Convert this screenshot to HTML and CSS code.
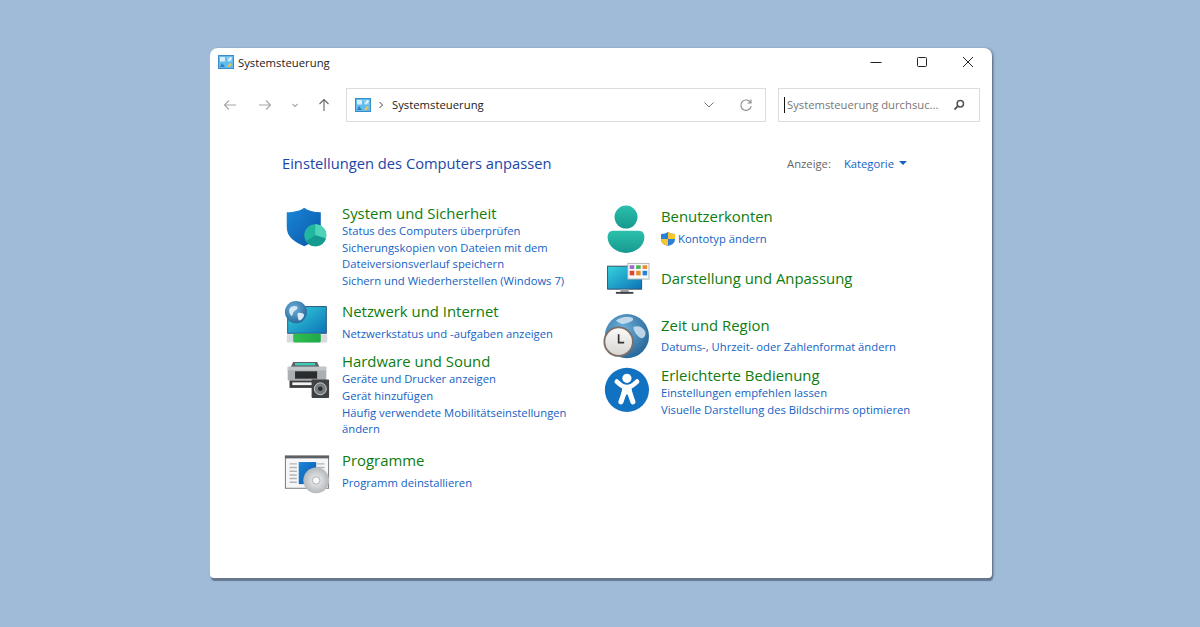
FILE: index.html
```html
<!DOCTYPE html>
<html lang="de">
<head>
<meta charset="utf-8">
<title>Systemsteuerung</title>
<link rel="stylesheet" href="styles.css">
</head>
<body>
<svg class="defs" width="0" height="0" aria-hidden="true">
  <defs>
    <linearGradient id="gBlue" x1="0" y1="0" x2="1" y2="1"><stop offset="0" stop-color="#1a86d8"/><stop offset="1" stop-color="#0a56a8"/></linearGradient>
    <linearGradient id="gTeal" x1="0" y1="0" x2="0" y2="1"><stop offset="0" stop-color="#2cc0ac"/><stop offset="1" stop-color="#16998f"/></linearGradient>
    <linearGradient id="gScreen" x1="0" y1="0" x2="1" y2="1"><stop offset="0" stop-color="#35d3dc"/><stop offset="1" stop-color="#0d72b8"/></linearGradient>
    <linearGradient id="gGreen" x1="0" y1="0" x2="1" y2="0"><stop offset="0" stop-color="#2fbf4e"/><stop offset="1" stop-color="#20a84a"/></linearGradient>
    <radialGradient id="gGlobe" cx=".4" cy=".35" r=".75"><stop offset="0" stop-color="#6fb2dc"/><stop offset="1" stop-color="#1f5f92"/></radialGradient>
    <radialGradient id="gDisc" cx=".5" cy=".5" r=".5"><stop offset="0" stop-color="#f2f2f2"/><stop offset="1" stop-color="#b4b8bc"/></radialGradient>
    <linearGradient id="gFace" x1="0" y1="0" x2="0" y2="1"><stop offset="0" stop-color="#fafafa"/><stop offset="1" stop-color="#d9d6d2"/></linearGradient>
    <symbol id="cp" viewBox="0 0 16 14">
      <rect x=".5" y=".5" width="15" height="13" fill="#63bdec" stroke="#3a8cc6"/>
      <rect x="2" y="2" width="5" height="4.500" fill="#d7eefa"/>
      <path d="M4 8l3 4H2z" fill="#2f7fc0"/>
      <path d="M9 2h5v4.500H9z" fill="#8fd2f2"/>
      <path d="M12.500 2L10 5.500l1 1L14 3z" fill="#f1f6fa"/>
      <path d="M9 12l3-4 2 1.500L11 12z" fill="#f0c648"/>
    </symbol>
  </defs>
</svg>
<main class="window">
  <header class="titlebar">
    <svg class="title-icon"><use href="#cp"/></svg>
    <span class="title-text">Systemsteuerung</span>
    <div class="controls">
      <svg class="ctl" viewBox="0 0 46 20"><path d="M17.500 10.500h11" stroke="#222" fill="none"/></svg>
      <svg class="ctl" viewBox="0 0 46 20"><rect x="18.500" y="5.500" width="9" height="9" rx="1" stroke="#222" fill="none"/></svg>
      <svg class="ctl" viewBox="0 0 46 20"><path d="M18 5l10 10M28 5L18 15" stroke="#222" fill="none"/></svg>
    </div>
  </header>
  <div class="toolbar">
    <nav class="nav">
      <svg class="nav-btn" viewBox="0 0 20 20"><path d="M16 10H4.500M9 5.500L4.500 10 9 14.500" fill="none" stroke="#a6a6a6" stroke-width="1.100"/></svg>
      <svg class="nav-btn" viewBox="0 0 20 20"><path d="M4 10h11.500M11 5.500l4.500 4.500-4.500 4.500" fill="none" stroke="#a6a6a6" stroke-width="1.100"/></svg>
      <svg class="nav-mini" viewBox="0 0 12 20"><path d="M3.500 9l2.500 2.500L8.500 9" fill="none" stroke="#a6a6a6" stroke-width="1.100"/></svg>
      <svg class="nav-btn" viewBox="0 0 20 20"><path d="M10 16V4.500M5.500 9L10 4.500 14.500 9" fill="none" stroke="#666" stroke-width="1.100"/></svg>
    </nav>
    <div class="address">
      <svg class="addr-icon"><use href="#cp"/></svg>
      <svg class="addr-sep" viewBox="0 0 6 10"><path d="M1.500 2l3 3-3 3" fill="none" stroke="#444"/></svg>
      <span class="addr-text">Systemsteuerung</span>
      <svg class="addr-chev" viewBox="0 0 12 8"><path d="M1.500 1.500L6 6l4.500-4.500" fill="none" stroke="#777"/></svg>
      <svg class="addr-refresh" viewBox="0 0 14 14"><path d="M11.800 5A5.200 5.200 0 1 0 12.200 8" fill="none" stroke="#8a8a8a" stroke-width="1.100"/><path d="M12 1.500V5H8.500" fill="none" stroke="#8a8a8a" stroke-width="1.100"/></svg>
    </div>
    <div class="search">
      <span class="caret"></span>
      <span class="search-text">Systemsteuerung durchsuc...</span>
      <svg class="search-icon" viewBox="0 0 12 12"><circle cx="7.300" cy="4.700" r="3.200" fill="none" stroke="#555" stroke-width="1.500"/><path d="M4.800 7.200L1.500 10.500" stroke="#555" stroke-width="1.800"/></svg>
    </div>
  </div>
  <section class="content">
    <div class="content-head">
      <h1 class="heading">Einstellungen des Computers anpassen</h1>
      <div class="view">
        <span class="view-label">Anzeige:</span>
        <a class="view-value">Kategorie</a>
        <span class="view-caret"></span>
      </div>
    </div>
    <div class="columns">
      <div class="col col-left">
        <article class="cat cat-system">
          <svg class="cat-icon" viewBox="0 0 50 50">
            <path d="M22 4c4 3 10 5 18 5v16c0 11-7 16-18 21C11 41 3 36 3 25V9c8 0 15-2 19-5z" fill="url(#gBlue)"/>
            <circle cx="34" cy="34" r="12" fill="#20b6a0"/>
            <path d="M34 34V22a12 12 0 0 1 11.500 15.500z" fill="#4fd3b8"/>
            <path d="M34 34l11.500 3.500A12 12 0 0 1 24 40.500z" fill="#149a90"/>
          </svg>
          <div class="cat-body">
            <h2 class="cat-title">System und Sicherheit</h2>
            <a class="link">Status des Computers überprüfen</a>
            <a class="link">Sicherungskopien von Dateien mit dem Dateiversionsverlauf speichern</a>
            <a class="link">Sichern und Wiederherstellen (Windows 7)</a>
          </div>
        </article>
        <article class="cat cat-net">
          <svg class="cat-icon" viewBox="0 0 50 50">
            <rect x="4" y="5" width="42" height="29" fill="url(#gScreen)" stroke="#1f4f78"/>
            <rect x="3" y="35" width="44" height="9" rx="1" fill="#d6dadd"/>
            <rect x="10" y="34.500" width="30" height="9.500" rx="1.500" fill="url(#gGreen)"/>
            <circle cx="13" cy="11" r="12" fill="url(#gGlobe)"/>
            <path d="M6 7c3-3 6-3 8-2 2 2-1 4-3 5-2 2-1 5-3 5-2-2-3-5-2-8zM15 12c3-1 6 0 7 2-1 4-4 6-6 6-1-3-2-6-1-8z" fill="#d7e9f4"/>
          </svg>
          <div class="cat-body">
            <h2 class="cat-title">Netzwerk und Internet</h2>
            <a class="link link-gap">Netzwerkstatus und -aufgaben anzeigen</a>
          </div>
        </article>
        <article class="cat cat-hw">
          <svg class="cat-icon" viewBox="0 0 50 50">
            <path d="M7 17l3-6h26l3 6z" fill="#5d6367"/>
            <rect x="12" y="12" width="22" height="2.500" fill="#3fd0b8"/>
            <rect x="4" y="16" width="42" height="15" rx="1" fill="#a9afb2"/>
            <rect x="4" y="16" width="42" height="4" fill="#c2c6c8"/>
            <rect x="12" y="21" width="24" height="8" fill="#2a2c2e"/>
            <rect x="6" y="31" width="30" height="8" fill="#3a3c3e"/>
            <rect x="9" y="33" width="26" height="3" fill="#f2f2f2"/>
            <rect x="30" y="30" width="19" height="20" rx="1" fill="#3f4245"/>
            <circle cx="39.500" cy="40" r="6.500" fill="#777b7f" stroke="#d0d2d4"/>
            <circle cx="39.500" cy="40" r="2.500" fill="#2b2d2f"/>
          </svg>
          <div class="cat-body">
            <h2 class="cat-title">Hardware und Sound</h2>
            <a class="link">Geräte und Drucker anzeigen</a>
            <a class="link">Gerät hinzufügen</a>
            <a class="link">Häufig verwendete Mobilitätseinstellungen ändern</a>
          </div>
        </article>
        <article class="cat cat-prog">
          <svg class="cat-icon" viewBox="0 0 50 50">
            <rect x="1.500" y="5.500" width="47" height="35" fill="#f6f6f6" stroke="#6f7276"/>
            <rect x="1" y="5" width="48" height="3" fill="#5d6064"/>
            <path d="M6 14h8M6 18h8M6 22h8M6 26h8M6 30h8M6 34h8M36 14h8M36 18h8M36 22h8" stroke="#b3b6b9" stroke-width="1.600"/>
            <rect x="16" y="12" width="19" height="24" fill="url(#gBlue)"/>
            <circle cx="35" cy="32" r="14" fill="url(#gDisc)"/>
            <circle cx="35" cy="32" r="4" fill="#fafafa" stroke="#a8acb0"/>
          </svg>
          <div class="cat-body">
            <h2 class="cat-title">Programme</h2>
            <a class="link link-gap">Programm deinstallieren</a>
          </div>
        </article>
      </div>
      <div class="col col-wide">
        <article class="cat cat-user">
          <svg class="cat-icon" viewBox="0 0 50 50">
            <circle cx="25" cy="12" r="12.500" fill="url(#gTeal)"/>
            <path d="M5 34c0-4 2-7 6-7h28c4 0 6 3 6 7 0 10-10 17-20 17S5 44 5 34z" fill="url(#gTeal)"/>
          </svg>
          <div class="cat-body">
            <h2 class="cat-title">Benutzerkonten</h2>
            <a class="link link-shield">
              <svg class="shield" viewBox="0 0 16 16">
                <path d="M8 1c2 1 4 2 7 2v5c0 4-3 6-7 7-4-1-7-3-7-7V3c3 0 5-1 7-2z" fill="#2b7fd4"/>
                <path d="M8 1c2 1 4 2 7 2v5H8zM8 8v7c-4-1-7-3-7-7z" fill="#f7c52d"/>
              </svg>
              Kontotyp ändern
            </a>
          </div>
        </article>
        <article class="cat cat-disp">
          <svg class="cat-icon" viewBox="0 0 50 50">
            <rect x="5" y="-2" width="37" height="25" fill="url(#gScreen)" stroke="#324a5e"/>
            <rect x="19" y="23" width="9" height="5" fill="#9aa0a5"/>
            <rect x="14" y="26" width="19" height="2" fill="#3c4146"/>
            <rect x="27" y="-5" width="23" height="17" fill="#fbfbfb" stroke="#aab0b4"/>
            <rect x="29" y="-3" width="5" height="4" fill="#9a6cc8"/>
            <rect x="36" y="-3" width="5" height="4" fill="#4fb35a"/>
            <rect x="43" y="-3" width="5" height="4" fill="#ef8a2c"/>
            <rect x="29" y="3" width="5" height="5" fill="#d9483b"/>
            <rect x="36" y="3" width="5" height="5" fill="#e88e2e"/>
            <rect x="43" y="3" width="5" height="5" fill="#2b7fd4"/>
          </svg>
          <div class="cat-body">
            <h2 class="cat-title">Darstellung und Anpassung</h2>
          </div>
        </article>
        <article class="cat cat-time">
          <svg class="cat-icon" viewBox="0 0 50 50">
            <circle cx="26" cy="23" r="24" fill="url(#gGlobe)"/>
            <path d="M14 6c6-4 13-5 18-3 3 3-3 5-7 6-4 2-7 0-11-3zM33 13c5-2 10 0 13 5 1 5-2 8-5 7-4-2-8-8-8-12z" fill="#dbeaf4" opacity=".8"/>
            <circle cx="17" cy="29" r="16.500" fill="#7d6f68"/>
            <circle cx="17" cy="29" r="14.500" fill="url(#gFace)"/>
            <path d="M17 21v9h6" fill="none" stroke="#333" stroke-width="1.800"/>
          </svg>
          <div class="cat-body">
            <h2 class="cat-title">Zeit und Region</h2>
            <a class="link link-gap">Datums-, Uhrzeit- oder Zahlenformat ändern</a>
          </div>
        </article>
        <article class="cat cat-access">
          <svg class="cat-icon" viewBox="0 0 50 50">
            <circle cx="26" cy="27" r="24" fill="#1272c2"/>
            <circle cx="26" cy="14.500" r="5" fill="#fff"/>
            <path d="M15 18c4 4 7 6 11 6s7-2 11-6" fill="none" stroke="#fff" stroke-width="5" stroke-linecap="round"/>
            <path d="M21 24h10l1 8H20z" fill="#fff"/>
            <path d="M23 30l-3.500 10M29 30l3.500 10" fill="none" stroke="#fff" stroke-width="5.500" stroke-linecap="round"/>
          </svg>
          <div class="cat-body">
            <h2 class="cat-title">Erleichterte Bedienung</h2>
            <a class="link">Einstellungen empfehlen lassen</a>
            <a class="link">Visuelle Darstellung des Bildschirms optimieren</a>
          </div>
        </article>
      </div>
    </div>
  </section>
</main>
</body>
</html>
```
FILE: styles.css
```css
* { box-sizing: border-box; }
html, body { margin: 0; height: 100%; }
body {
  background: #9fbbd7;
  padding: 48px 0 0 210px;
  font-family: "Open Sans", "Noto Sans", sans-serif;
  overflow: hidden;
}
.defs { position: absolute; }
.window {
  width: 782px;
  height: 530px;
  background: #fff;
  border-radius: 8px 8px 4px 4px;
  box-shadow: 1px 3px 1px #66788f, 2px 0 2px #7f96b0;
  display: flex;
  flex-direction: column;
}
.titlebar {
  height: 28px;
  display: flex;
  align-items: center;
  padding-left: 8px;
  margin-bottom: 12px;
}
.title-icon { width: 16px; height: 14px; margin-right: 4px; }
.title-text { font-size: 11.300px; color: #222; }
.controls { margin-left: auto; margin-right: 1px; display: flex; }
.ctl { width: 46px; height: 20px; display: block; }
.toolbar { display: flex; height: 34px; padding-left: 10px; }
.nav { width: 126px; display: flex; align-items: center; }
.nav-btn { width: 20px; height: 20px; }
.nav-btn + .nav-btn { margin-left: 15px; }
.nav-mini { width: 12px; height: 20px; margin: 0 13px 0 14px; }
.address {
  width: 420px;
  border: 1px solid #dcdcdc;
  display: flex;
  align-items: center;
  padding-left: 8px;
}
.addr-icon { width: 16px; height: 14px; }
.addr-sep { width: 6px; height: 10px; margin: 0 8px 0 7px; }
.addr-text { font-size: 11.300px; color: #222; position: relative; top: -1px; }
.addr-chev { width: 12px; height: 8px; margin-left: auto; margin-right: 24px; }
.addr-refresh { width: 14px; height: 14px; margin-right: 12px; }
.search {
  width: 202px;
  margin-left: 12px;
  border: 1px solid #dcdcdc;
  display: flex;
  align-items: center;
  padding-left: 5px;
}
.caret { width: 1px; height: 16px; background: #111; margin-right: 2px; }
.search-text { font-size: 11.250px; color: #777; white-space: nowrap; position: relative; top: -1px; }
.search-icon { width: 12px; height: 12px; margin-left: auto; margin-right: 14px; }
.content { padding: 29px 0 0 72px; }
.content-head { display: flex; align-items: center; height: 24px; margin-bottom: 29px; }
.heading { margin: 0; font-size: 14.700px; font-weight: 400; color: #1c46a8; }
.view { margin-left: auto; margin-right: 85px; display: flex; align-items: center; font-size: 11.250px; }
.view-label { color: #666; margin-right: 13px; }
.view-value { color: #1462c4; }
.view-caret {
  width: 0;
  height: 0;
  margin-left: 5px;
  border-left: 4px solid transparent;
  border-right: 4px solid transparent;
  border-top: 4px solid #1462c4;
}
.columns { display: flex; }
.col { width: 319px; }
.col-left { margin-top: -1px; }
.col-left .cat-icon { margin-top: 1px; }
.cat { display: flex; }
.cat-icon { width: 50px; height: 46px; overflow: visible; flex: none; margin-right: 10px; }
.cat-body { flex: 1; min-width: 0; }
.cat-title { margin: 0; font-size: 14.900px; line-height: 20px; font-weight: 400; color: #0e7c0e; }
.link { display: block; font-size: 11.250px; line-height: 15.500px; color: #1462c4; margin-top: 1.500px; max-width: 232px; }
.cat-title + .link { margin-top: 0; }
.col-left .cat-title + .link-gap { margin-top: 5px; }
.col-wide .cat-title + .link-gap { margin-top: 4px; }
.col-wide .link { max-width: 262px; }
.cat-system { height: 98px; }
.cat-net { height: 50px; }
.cat-hw { height: 99px; }
.cat-user { height: 62px; margin-top: 2px; }
.cat-disp { height: 47px; }
.cat-time { height: 50px; }
.col-wide .cat-title + .link-shield { display: flex; align-items: center; margin-top: 5px; }
.shield { width: 16px; height: 16px; margin-right: 2px; margin-left: -1px; }
```
